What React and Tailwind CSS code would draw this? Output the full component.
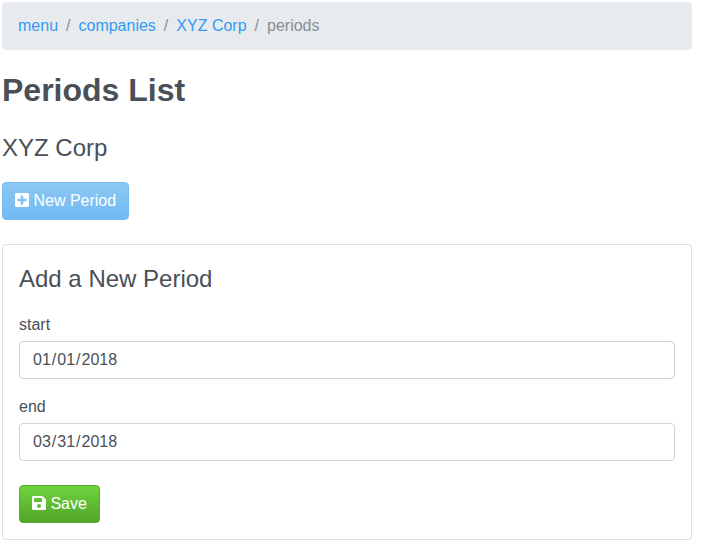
import React from 'react';
import { FaPlusSquare, FaSave } from 'react-icons/fa';

const crumbs = ['menu', 'companies', 'XYZ Corp'];

function Breadcrumb() {
  return (
    <nav className="flex h-12 items-center rounded bg-[#e8ebee] px-4">
      {crumbs.map((label) => (
        <React.Fragment key={label}>
          <a href="#" className="text-[#3399f3]">{label}</a>
          <span className="px-2 text-[#868e96]">/</span>
        </React.Fragment>
      ))}
      <span className="text-[#868e96]">periods</span>
    </nav>
  );
}

function DateField({ label, month, day, year }) {
  return (
    <div className="mb-4">
      <label className="mb-1 block leading-6">{label}</label>
      <div className="flex h-[38px] w-full items-center rounded border border-[#ced4da] bg-white px-3">
        <span className="px-px">{month}</span>
        <span>/</span>
        <span className="px-px">{day}</span>
        <span>/</span>
        <span className="px-px">{year}</span>
      </div>
    </div>
  );
}

export default function App() {
  return (
    <div className="h-[549px] w-full bg-white pt-0.5 pr-2.5 pl-0.5 font-['Liberation_Sans',Arial,sans-serif] text-base leading-6 text-[#495057]">
      <Breadcrumb />
      <h1 className="mt-5 text-[32px] leading-10 font-bold">Periods List</h1>
      <h2 className="mt-[23px] text-2xl leading-[29px]">XYZ Corp</h2>
      <button
        disabled
        className="mt-5 flex h-[38px] items-center rounded border border-[#3399ef] bg-linear-to-b from-[#4cabef] to-[#2594eb] px-3 text-white opacity-65"
      >
        <FaPlusSquare className="mr-[4.45px] mb-0.5 h-4 w-3.5" />
        New Period
      </button>
      <section className="mt-6 h-[296px] rounded border border-[#dfdfdf] px-4 pt-[19px]">
        <h3 className="mb-5 text-2xl leading-[29px]">Add a New Period</h3>
        <DateField label="start" month="01" day="01" year="2018" />
        <DateField label="end" month="03" day="31" year="2018" />
        <button className="mt-6 flex h-[38px] items-center rounded border border-[#53ad2a] bg-linear-to-b from-[#6fd33f] to-[#51a528] px-3 text-white">
          <FaSave className="mr-[4.45px] mb-0.5 h-4 w-3.5" />
          Save
        </button>
      </section>
    </div>
  );
}
